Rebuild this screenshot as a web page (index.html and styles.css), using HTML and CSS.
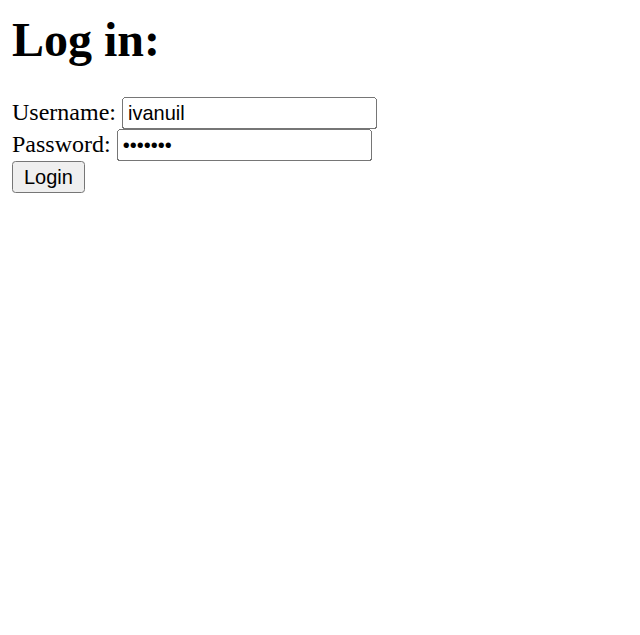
FILE: index.html
```html
<!DOCTYPE html>
<html>
<head>
<meta charset="utf-8">
<title>Log in</title>
<link rel="stylesheet" href="styles.css">
</head>
<body class="page">
<h1 class="title">Log in:</h1>
<form class="login-form">
Username: <input class="field" type="text" name="username" value="ivanuil"><br>
Password: <input class="field" type="password" name="password" value="1234567"><br>
<button class="submit" type="submit">Login</button>
</form>
</body>
</html>
```
FILE: styles.css
```css
.page {
  zoom: 1.5;
  margin: 8px;
  font-family: "Liberation Serif", "Times New Roman", serif;
  font-size: 16px;
  color: #000;
  background: #fff;
}
.title {
  font-size: 2em;
  font-weight: bold;
  margin: 0 0 20px 0;
}
.login-form {
  margin: 0;
}
.field {
  font-family: "Liberation Sans", Arial, sans-serif;
  font-size: 13.333px;
  box-sizing: border-box;
  width: 170px;
}
.submit {
  font-family: "Liberation Sans", Arial, sans-serif;
  font-size: 13.333px;
}
```
